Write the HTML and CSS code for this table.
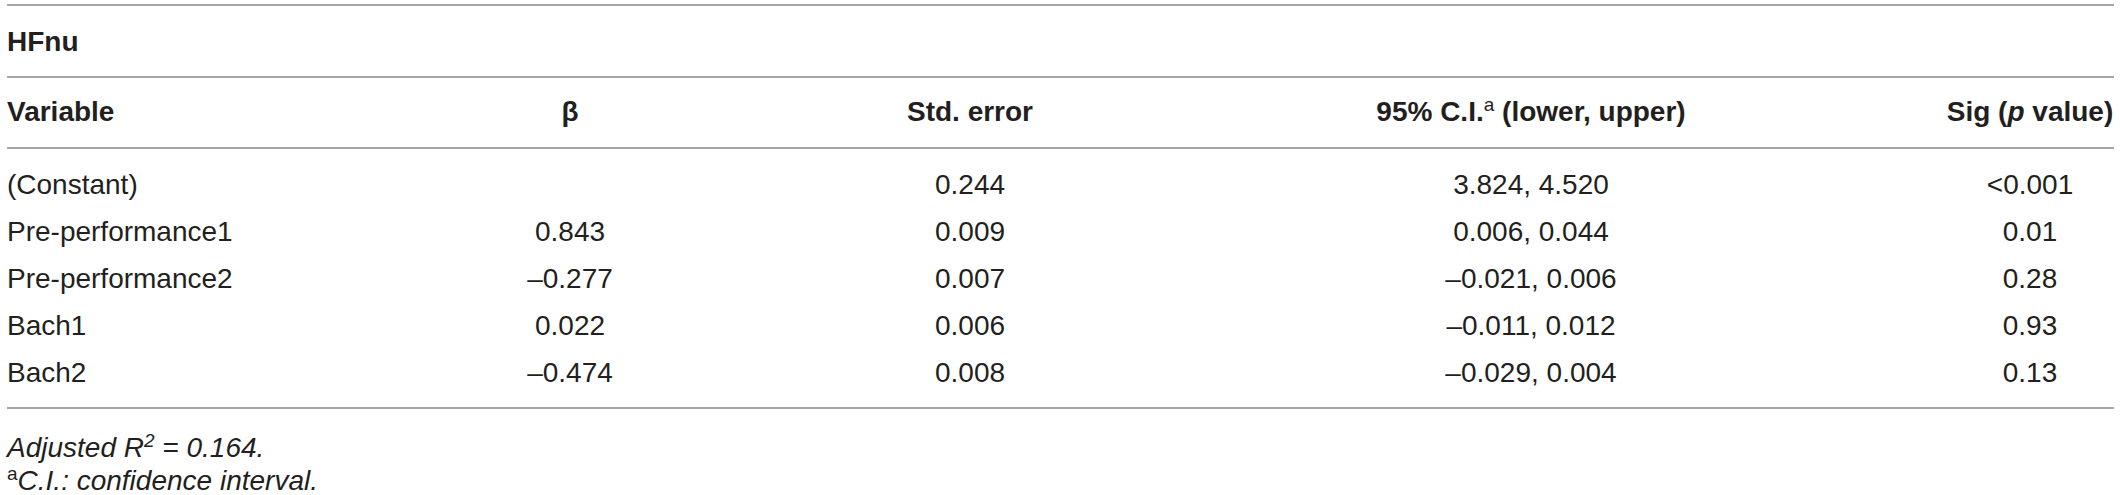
FILE: index.html
```html
<!DOCTYPE html>
<html lang="en">
<head>
<meta charset="utf-8">
<title>HFnu regression</title>
<link rel="stylesheet" href="styles.css">
</head>
<body>
<div class="wrap">
  <table class="tbl">
    <colgroup>
      <col class="c1"><col class="c2"><col class="c3"><col class="c4"><col class="c5">
    </colgroup>
    <thead>
      <tr class="group"><th colspan="5" class="left">HFnu</th></tr>
      <tr class="heads">
        <th class="left">Variable</th>
        <th>β</th>
        <th>Std. error</th>
        <th>95% C.I.<sup class="sup">a</sup> (lower, upper)</th>
        <th>Sig (<i>p</i> value)</th>
      </tr>
    </thead>
    <tbody>
      <tr><td class="left">(Constant)</td><td></td><td>0.244</td><td>3.824, 4.520</td><td>&lt;0.001</td></tr>
      <tr><td class="left">Pre-performance1</td><td>0.843</td><td>0.009</td><td>0.006, 0.044</td><td>0.01</td></tr>
      <tr><td class="left">Pre-performance2</td><td>–0.277</td><td>0.007</td><td>–0.021, 0.006</td><td>0.28</td></tr>
      <tr><td class="left">Bach1</td><td>0.022</td><td>0.006</td><td>–0.011, 0.012</td><td>0.93</td></tr>
      <tr><td class="left">Bach2</td><td>–0.474</td><td>0.008</td><td>–0.029, 0.004</td><td>0.13</td></tr>
    </tbody>
  </table>
  <div class="notes">
    <p class="note">Adjusted <i>R</i><sup class="sup">2</sup> = 0.164.</p>
    <p class="note"><sup class="sup up">a</sup>C.I.: confidence interval.</p>
  </div>
</div>
</body>
</html>
```

FILE: styles.css
```css
html, body {
  margin: 0;
  padding: 0;
  background: #ffffff;
}

body {
  font-family: "Liberation Sans", Arial, Helvetica, sans-serif;
  font-size: 28px;
  color: #231f20;
}

.wrap {
  padding: 4px 0 0 7px;
  width: 2107px;
}

.tbl {
  width: 2107px;
  table-layout: fixed;
  border-collapse: collapse;
  border-top: 2px solid #a6a6a6;
  border-bottom: 2px solid #a6a6a6;
}

.c1 { width: 309px; }
.c2 { width: 508px; }
.c3 { width: 292px; }
.c4 { width: 830px; }
.c5 { width: 168px; }

.tbl th,
.tbl td {
  padding: 0;
  text-align: center;
  white-space: nowrap;
  font-weight: normal;
}

.tbl th {
  font-weight: bold;
  line-height: 32px;
}

.tbl .left {
  text-align: left;
}

.group th {
  padding: 20px 0 18px;
  border-bottom: 2px solid #a6a6a6;
}

.heads th {
  padding: 18px 0 19px;
  border-bottom: 2px solid #a6a6a6;
}

.tbl td {
  line-height: 47px;
}

.tbl tbody tr:first-child td {
  padding-top: 12px;
}

.tbl tbody tr:last-child td {
  padding-bottom: 11px;
}

.sup {
  font-size: 19px;
  font-weight: normal;
  line-height: 0;
  vertical-align: 10px;
}

.sup.up {
  font-style: normal;
}

.notes {
  margin-top: 22px;
}

.note {
  margin: 0;
  font-style: italic;
  line-height: 33px;
}
```
